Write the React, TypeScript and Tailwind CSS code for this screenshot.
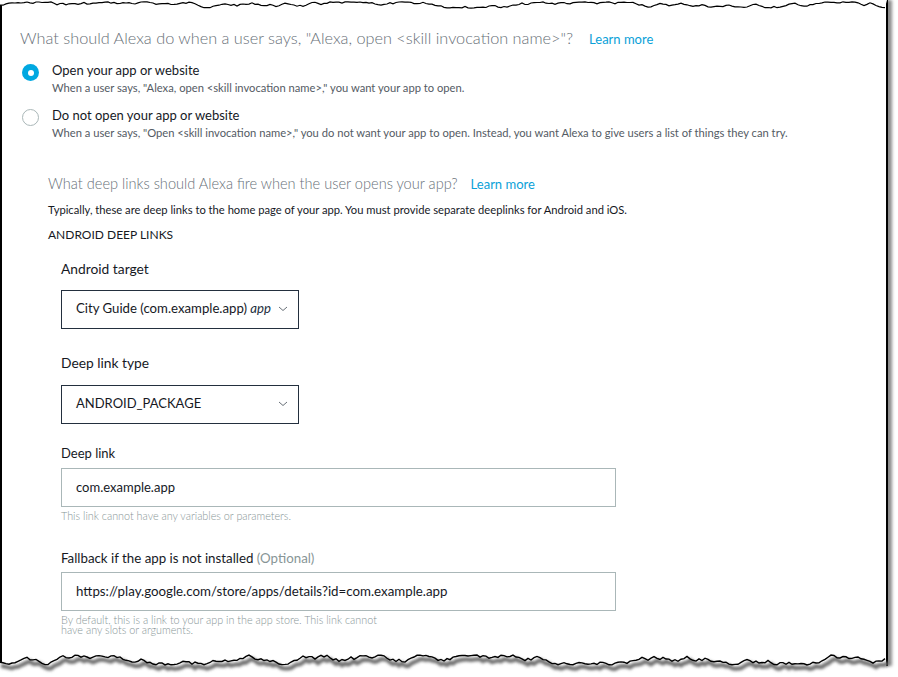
import React from "react";

function rand(seed: number) {
  let s = seed;
  return () => {
    s = (s * 9301 + 49297) % 233280;
    return s / 233280;
  };
}

function jagged(seed: number, width: number, base: number, amp: number) {
  const r = rand(seed);
  let d = `M 0 ${base}`;
  let y = base;
  for (let x = 0; x <= width; x += 3) {
    y += (r() - 0.5) * amp;
    if (y > base + amp) y = base + amp - r();
    if (y < base - amp) y = base - amp + r();
    d += ` L ${x} ${y.toFixed(1)}`;
  }
  return d;
}

function TopEdge() {
  const d = jagged(7, 887, 5, 3.2);
  return (
    <svg className="absolute left-0 top-0" width="898" height="14" viewBox="0 0 898 14">
      <path d={`${d} L 887 0 L 0 0 Z`} fill="#ffffff" />
      <path d={d} fill="none" stroke="#000" strokeWidth="1.2" />
    </svg>
  );
}

function BottomEdge() {
  const d = jagged(19, 887, 16, 5);
  return (
    <svg className="absolute left-0 top-[644px]" width="898" height="33" viewBox="0 0 898 33">
      <defs>
        <filter id="blur" x="-5%" y="-50%" width="110%" height="200%">
          <feGaussianBlur stdDeviation="1.6" />
        </filter>
      </defs>
      <path d={`${d} L 887 33 L 0 33 Z`} fill="#ffffff" />
      <g transform="translate(3 4)" filter="url(#blur)">
        <path d={d} fill="none" stroke="#6b6b6b" strokeWidth="4" />
      </g>
      <path d={d} fill="none" stroke="#000" strokeWidth="1.4" />
    </svg>
  );
}

function Chevron() {
  return (
    <svg width="10" height="6" viewBox="0 0 10 6" className="ml-auto">
      <polyline points="1,1 5,4.5 9,1" fill="none" stroke="#687078" strokeWidth="1" />
    </svg>
  );
}

export default function App() {
  return (
    <div
      className="relative w-[898px] h-[677px] bg-white overflow-hidden text-[#16191f]"
      style={{ fontFamily: "Lato, 'Open Sans', sans-serif" }}
    >
      <div className="w-[888px] h-[666px] bg-white border-l-2 border-r-2 border-black shadow-[4px_0_3px_rgba(0,0,0,0.45)] pt-[26px] pl-[18px]">
        <div className="flex items-baseline">
          <span className="text-[16.3px] font-light text-[#687078]">
            What should Alexa do when a user says, "Alexa, open &lt;skill invocation name&gt;"?
          </span>
          <span className="ml-[16px] text-[13px] text-[#0aa1d8]">Learn more</span>
        </div>

        <div className="mt-[12px] flex">
          <div className="w-[17px] h-[17px] rounded-full bg-[#00a8e1] flex items-center justify-center mt-[2px] ml-[2px]">
            <div className="w-[6px] h-[6px] rounded-full bg-white" />
          </div>
          <div className="ml-[13px]">
            <div className="text-[13px] leading-[17px]">Open your app or website</div>
            <div className="text-[11.2px] leading-[15px] text-[#545b64] mt-[1px]">
              When a user says, "Alexa, open &lt;skill invocation name&gt;," you want your app to open.
            </div>
          </div>
        </div>

        <div className="mt-[12px] flex">
          <div className="w-[17px] h-[17px] rounded-full border border-[#aab7b8] mt-[2px] ml-[2px]" />
          <div className="ml-[13px]">
            <div className="text-[13px] leading-[17px]">Do not open your app or website</div>
            <div className="text-[11.2px] leading-[15px] text-[#545b64] mt-[1px]">
              When a user says, "Open &lt;skill invocation name&gt;," you do not want your app to open. Instead, you want Alexa to give users a list of things they can try.
            </div>
          </div>
        </div>

        <div className="pl-[28px] mt-[33px]">
          <div className="flex items-baseline">
            <span className="text-[14.6px] font-light text-[#687078]">
              What deep links should Alexa fire when the user opens your app?
            </span>
            <span className="ml-[13px] text-[13px] text-[#0aa1d8]">Learn more</span>
          </div>
          <div className="mt-[7px] text-[11.2px] text-[#16191f]">
            Typically, these are deep links to the home page of your app. You must provide separate deeplinks for Android and iOS.
          </div>
          <div className="mt-[7px] text-[12px]">ANDROID DEEP LINKS</div>

          <div className="pl-[13px]">
            <div className="mt-[15px] text-[13.8px]">Android target</div>
            <div className="mt-[10px] w-[238px] h-[39px] border border-[#232f3e] flex items-center pl-[14px] pr-[10px] text-[13.2px]">
              <span>
                City Guide (com.example.app) <i className="text-[#232f3e]">app</i>
              </span>
              <Chevron />
            </div>

            <div className="mt-[24px] text-[13.8px]">Deep link type</div>
            <div className="mt-[11px] w-[238px] h-[39px] border border-[#232f3e] flex items-center pl-[14px] pr-[10px] text-[13px]">
              <span>ANDROID_PACKAGE</span>
              <Chevron />
            </div>

            <div className="mt-[20px] text-[13px]">Deep link</div>
            <div className="mt-[5px] w-[555px] h-[39px] border border-[#aab7b8] flex items-center pl-[14px] text-[13px]">
              com.example.app
            </div>
            <div className="mt-[1px] text-[10.8px] font-light text-[#879596]">
              This link cannot have any variables or parameters.
            </div>

            <div className="mt-[25px] text-[13.3px]">
              Fallback if the app is not installed <span className="text-[#879596]">(Optional)</span>
            </div>
            <div className="mt-[3px] w-[555px] h-[39px] border border-[#aab7b8] flex items-center pl-[14px] text-[13.3px]">
              https://play.google.com/store/apps/details?id=com.example.app
            </div>
            <div className="mt-[4px] w-[325px] text-[10.8px] leading-[10px] font-light text-[#879596]">
              By default, this is a link to your app in the app store. This link cannot have any slots or arguments.
            </div>
          </div>
        </div>
      </div>
      <TopEdge />
      <BottomEdge />
    </div>
  );
}
